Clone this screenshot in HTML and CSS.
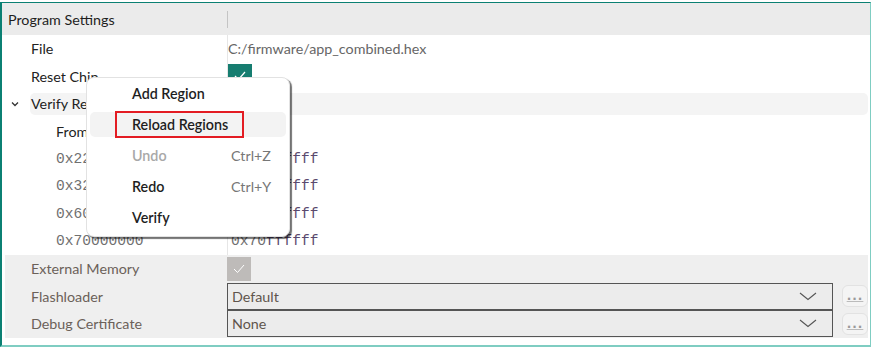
FILE: index.html
```html
<!DOCTYPE html>
<html lang="en">
  <head>
    <meta charset="UTF-8" />
    <title>Program Settings</title>
    <link rel="stylesheet" href="styles.css">
  </head>
  <body>
    <div class="panel">
      <div class="header">
        <div class="header-title">Program Settings</div>
        <div class="header-value"><span class="header-sep"></span></div>
      </div>

      <div class="row">
        <div class="label">File</div>
        <div class="value path">C:/firmware/app_combined.hex</div>
      </div>
      <div class="row">
        <div class="label">Reset Chip</div>
        <div class="value"><span class="check on">
          <svg width="12" height="10" viewBox="0 0 12 10"><polyline points="1,5 4.5,8.5 11,1" fill="none" stroke="#fff" stroke-width="1.2"/></svg>
        </span></div>
      </div>
      <div class="row group">
        <span class="toggle">
          <svg width="8" height="6" viewBox="0 0 8 6"><polyline points="1,1.5 4,4.5 7,1.5" fill="none" stroke="#333" stroke-width="1.3"/></svg>
        </span>
        <div class="group-head">Verify Regions</div>
      </div>
      <div class="row sub">
        <div class="label">From</div>
        <div class="value">To</div>
      </div>
      <div class="row sub">
        <div class="label hex">0x22000000</div>
        <div class="value hex">0x22<span class="ff">0fffff</span></div>
      </div>
      <div class="row sub">
        <div class="label hex">0x32000000</div>
        <div class="value hex">0x32<span class="ff">0fffff</span></div>
      </div>
      <div class="row sub">
        <div class="label hex">0x60000000</div>
        <div class="value hex">0x60<span class="ff">ffffff</span></div>
      </div>
      <div class="row sub">
        <div class="label hex">0x70000000</div>
        <div class="value hex">0x70<span class="ff">ffffff</span></div>
      </div>

      <div class="row disabled">
        <div class="label">External Memory</div>
        <div class="value"><span class="check off">
          <svg width="12" height="10" viewBox="0 0 12 10"><polyline points="1,5 4.5,8.5 11,1" fill="none" stroke="#fff" stroke-width="1"/></svg>
        </span></div>
      </div>
      <div class="row disabled">
        <div class="label">Flashloader</div>
        <div class="value combo-cell">
          <div class="combo">
            <span>Default</span>
            <svg width="18" height="9" viewBox="0 0 18 9"><polyline points="1,1 9,7.5 17,1" fill="none" stroke="#555" stroke-width="1.1"/></svg>
          </div>
          <button class="more">...</button>
        </div>
      </div>
      <div class="row disabled">
        <div class="label">Debug Certificate</div>
        <div class="value combo-cell">
          <div class="combo">
            <span>None</span>
            <svg width="18" height="9" viewBox="0 0 18 9"><polyline points="1,1 9,7.5 17,1" fill="none" stroke="#555" stroke-width="1.1"/></svg>
          </div>
          <button class="more">...</button>
        </div>
      </div>

      <!-- context menu over the tree -->
      <div class="menu">
        <div class="menu-item">Add Region</div>
        <div class="menu-item hover"><span class="mark">Reload Regions</span></div>
        <div class="menu-item muted">Undo<span class="key">Ctrl+Z</span></div>
        <div class="menu-item">Redo<span class="key">Ctrl+Y</span></div>
        <div class="menu-item">Verify</div>
      </div>
    </div>
  </body>
</html>
```

FILE: styles.css
```css
body {
  margin: 0;
  padding: 0;
  background-color: #fff;
  font-family: Lato, "Noto Sans", sans-serif;
  font-size: 14.3px;
  color: #222;
}

.panel {
  position: relative;
  box-sizing: border-box;
  width: 871px;
  height: 345px;
  margin-top: 2px;
  border-top: 1px solid #0b8073;
  border-left: 2px solid #0b8073;
  border-right: 1px solid #7fcdc2;
  border-bottom: 2px solid #7fcdc2;
}

/* Header */
.header {
  display: grid;
  grid-template-columns: 225px 1fr;
  height: 32px;
  align-items: center;
  background-color: #ebebeb;
}

.header-title {
  padding-left: 6px;
  color: #1e1e1e;
}

.header-sep {
  display: block;
  width: 1px;
  height: 17px;
  background-color: #c4c4c4;
}

/* Rows */
.row {
  display: grid;
  grid-template-columns: 225px 1fr;
  height: 27.5px;
  align-items: center;
}

.label {
  padding-left: 29px;
}

.value {
  height: 100%;
  display: flex;
  align-items: center;
  border-left: 1px solid #e6e6e6;
}

.path {
  color: #666;
}

.row.sub .label {
  padding-left: 54px;
}

.hex {
  font-family: "Liberation Mono", monospace;
  font-size: 14.6px;
  color: #707070;
}

.value.hex {
  padding-left: 3px;
}

.ff {
  color: #5b4a6e;
}

/* Group head */
.row.group {
  display: flex;
}

.toggle {
  width: 28px;
  display: flex;
  justify-content: center;
  padding-right: 2px;
  box-sizing: border-box;
}

.group-head {
  flex: 1;
  height: 22px;
  line-height: 22px;
  margin-right: 2px;
  padding-left: 1px;
  background-color: #f4f4f4;
  border-radius: 5px;
}

/* Disabled rows */
.row.disabled {
  margin: 0 2px 0 3px;
  grid-template-columns: 222px 1fr;
  background-color: #efefef;
  color: #6b6159;
}

.row.disabled .label {
  padding-left: 26px;
}

.row.disabled .value {
  border-left: none;
}

/* Checkboxes */
.check {
  width: 24px;
  height: 24px;
  display: flex;
  align-items: center;
  justify-content: center;
}

.check.on {
  background-color: #167d70;
}

.check.off {
  background-color: #bebbb9;
}

/* Combo boxes */
.combo-cell {
  gap: 9px;
}

.combo {
  box-sizing: border-box;
  width: 606px;
  height: 27px;
  display: flex;
  align-items: center;
  justify-content: space-between;
  padding: 0 15px 0 4px;
  border: 1px solid #555;
  background-color: #ececec;
  color: #5f554c;
}

.more {
  width: 26px;
  height: 22px;
  padding: 0 0 4px 0;
  border: 1px solid #e2e2e2;
  border-radius: 6px;
  background-color: #f4f4f4;
  color: #9a9a9a;
  font-family: "DejaVu Sans", sans-serif;
  font-size: 12px;
  font-weight: bold;
  letter-spacing: 1px;
  line-height: 1;
  text-decoration: underline;
  text-decoration-color: #bbb;
  display: flex;
  align-items: flex-end;
  justify-content: center;
}

/* Context menu */
.menu {
  position: absolute;
  left: 84px;
  top: 74px;
  width: 202px;
  padding: 0 0 3px 0;
  background-color: #fff;
  border: 1px solid #e2e2e2;
  border-radius: 8px;
  box-shadow: 2px 2px 1px rgba(0, 0, 0, 0.55);
}

.menu-item {
  position: relative;
  height: 31px;
  display: flex;
  align-items: center;
  padding-left: 45px;
  font-weight: 600;
  color: #1e1e1e;
}

.menu-item.hover::before {
  content: "";
  position: absolute;
  left: 3px;
  right: 3px;
  top: 3px;
  bottom: 3px;
  background-color: #f3f3f3;
  border-radius: 5px;
}

.menu-item.muted {
  color: #a8a8a8;
}

.key {
  position: absolute;
  left: 144px;
  font-weight: 400;
  color: #777;
}

.mark {
  position: relative;
  box-sizing: border-box;
  height: 27px;
  display: flex;
  align-items: center;
  margin-left: -17px;
  padding: 0 14px 0 15px;
  border: 2px solid #e31c23;
}
```
